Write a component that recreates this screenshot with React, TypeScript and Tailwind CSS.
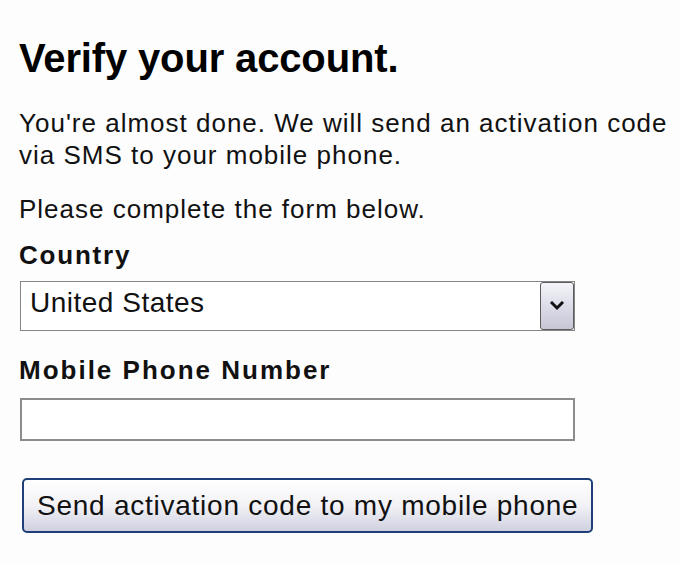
import React from 'react';

const sans = { fontFamily: '"Liberation Sans", Arial, sans-serif' };

const Chevron: React.FC = () => (
  <svg width="14" height="10" viewBox="0 0 14 10">
    <polyline points="2,2 7,7 12,2" fill="none" stroke="#111" strokeWidth="3" strokeLinecap="square" />
  </svg>
);

export default function App() {
  return (
    <div className="w-[680px] h-[564px] bg-[#fdfdfd] text-[#111] pl-[19px] pt-[38px] overflow-hidden" style={sans}>
      <h1 className="text-[40px] leading-[40px] font-bold tracking-[-0.15px] text-black">Verify your account.</h1>

      <p className="mt-[29px] text-[26px] leading-[32px] tracking-[1px] whitespace-nowrap">
        You're almost done. We will send an activation code
        <br />
        via SMS to your mobile phone.
      </p>

      <p className="mt-[22px] text-[26px] leading-[32px] tracking-[1px]">Please complete the form below.</p>

      <label className="block mt-[14px] text-[26px] leading-[32px] font-bold tracking-[1.8px]">Country</label>

      <div className="mt-[10px] ml-[1px] w-[555px] h-[50px] border border-[#858585] bg-white flex justify-between">
        <span className="pl-[9px] pt-[7px] text-[28px] leading-[28px] tracking-[0.5px]">United States</span>
        <div className="w-[34px] h-full rounded-[3px] border border-[#5c5c5c] bg-gradient-to-b from-[#f4f4fa] to-[#c6c6d6] flex items-center justify-center">
          <Chevron />
        </div>
      </div>

      <label className="block mt-[23px] text-[26px] leading-[32px] font-bold tracking-[2px]">Mobile Phone Number</label>

      <div className="mt-[12px] ml-[1px] w-[555px] h-[43px] border-2 border-[#8c8c8c] bg-white" />

      <button className="mt-[37px] ml-[3px] w-[571px] h-[55px] rounded-[5px] border-2 border-[#1f3f78] bg-gradient-to-b from-white via-[#f2f2f6] to-[#cfd1e0] text-left pl-[13px] pt-[12px] flex items-start">
        <span className="text-[28px] leading-[28px] tracking-[0.75px] text-[#111]">Send activation code to my mobile phone</span>
      </button>
    </div>
  );
}
